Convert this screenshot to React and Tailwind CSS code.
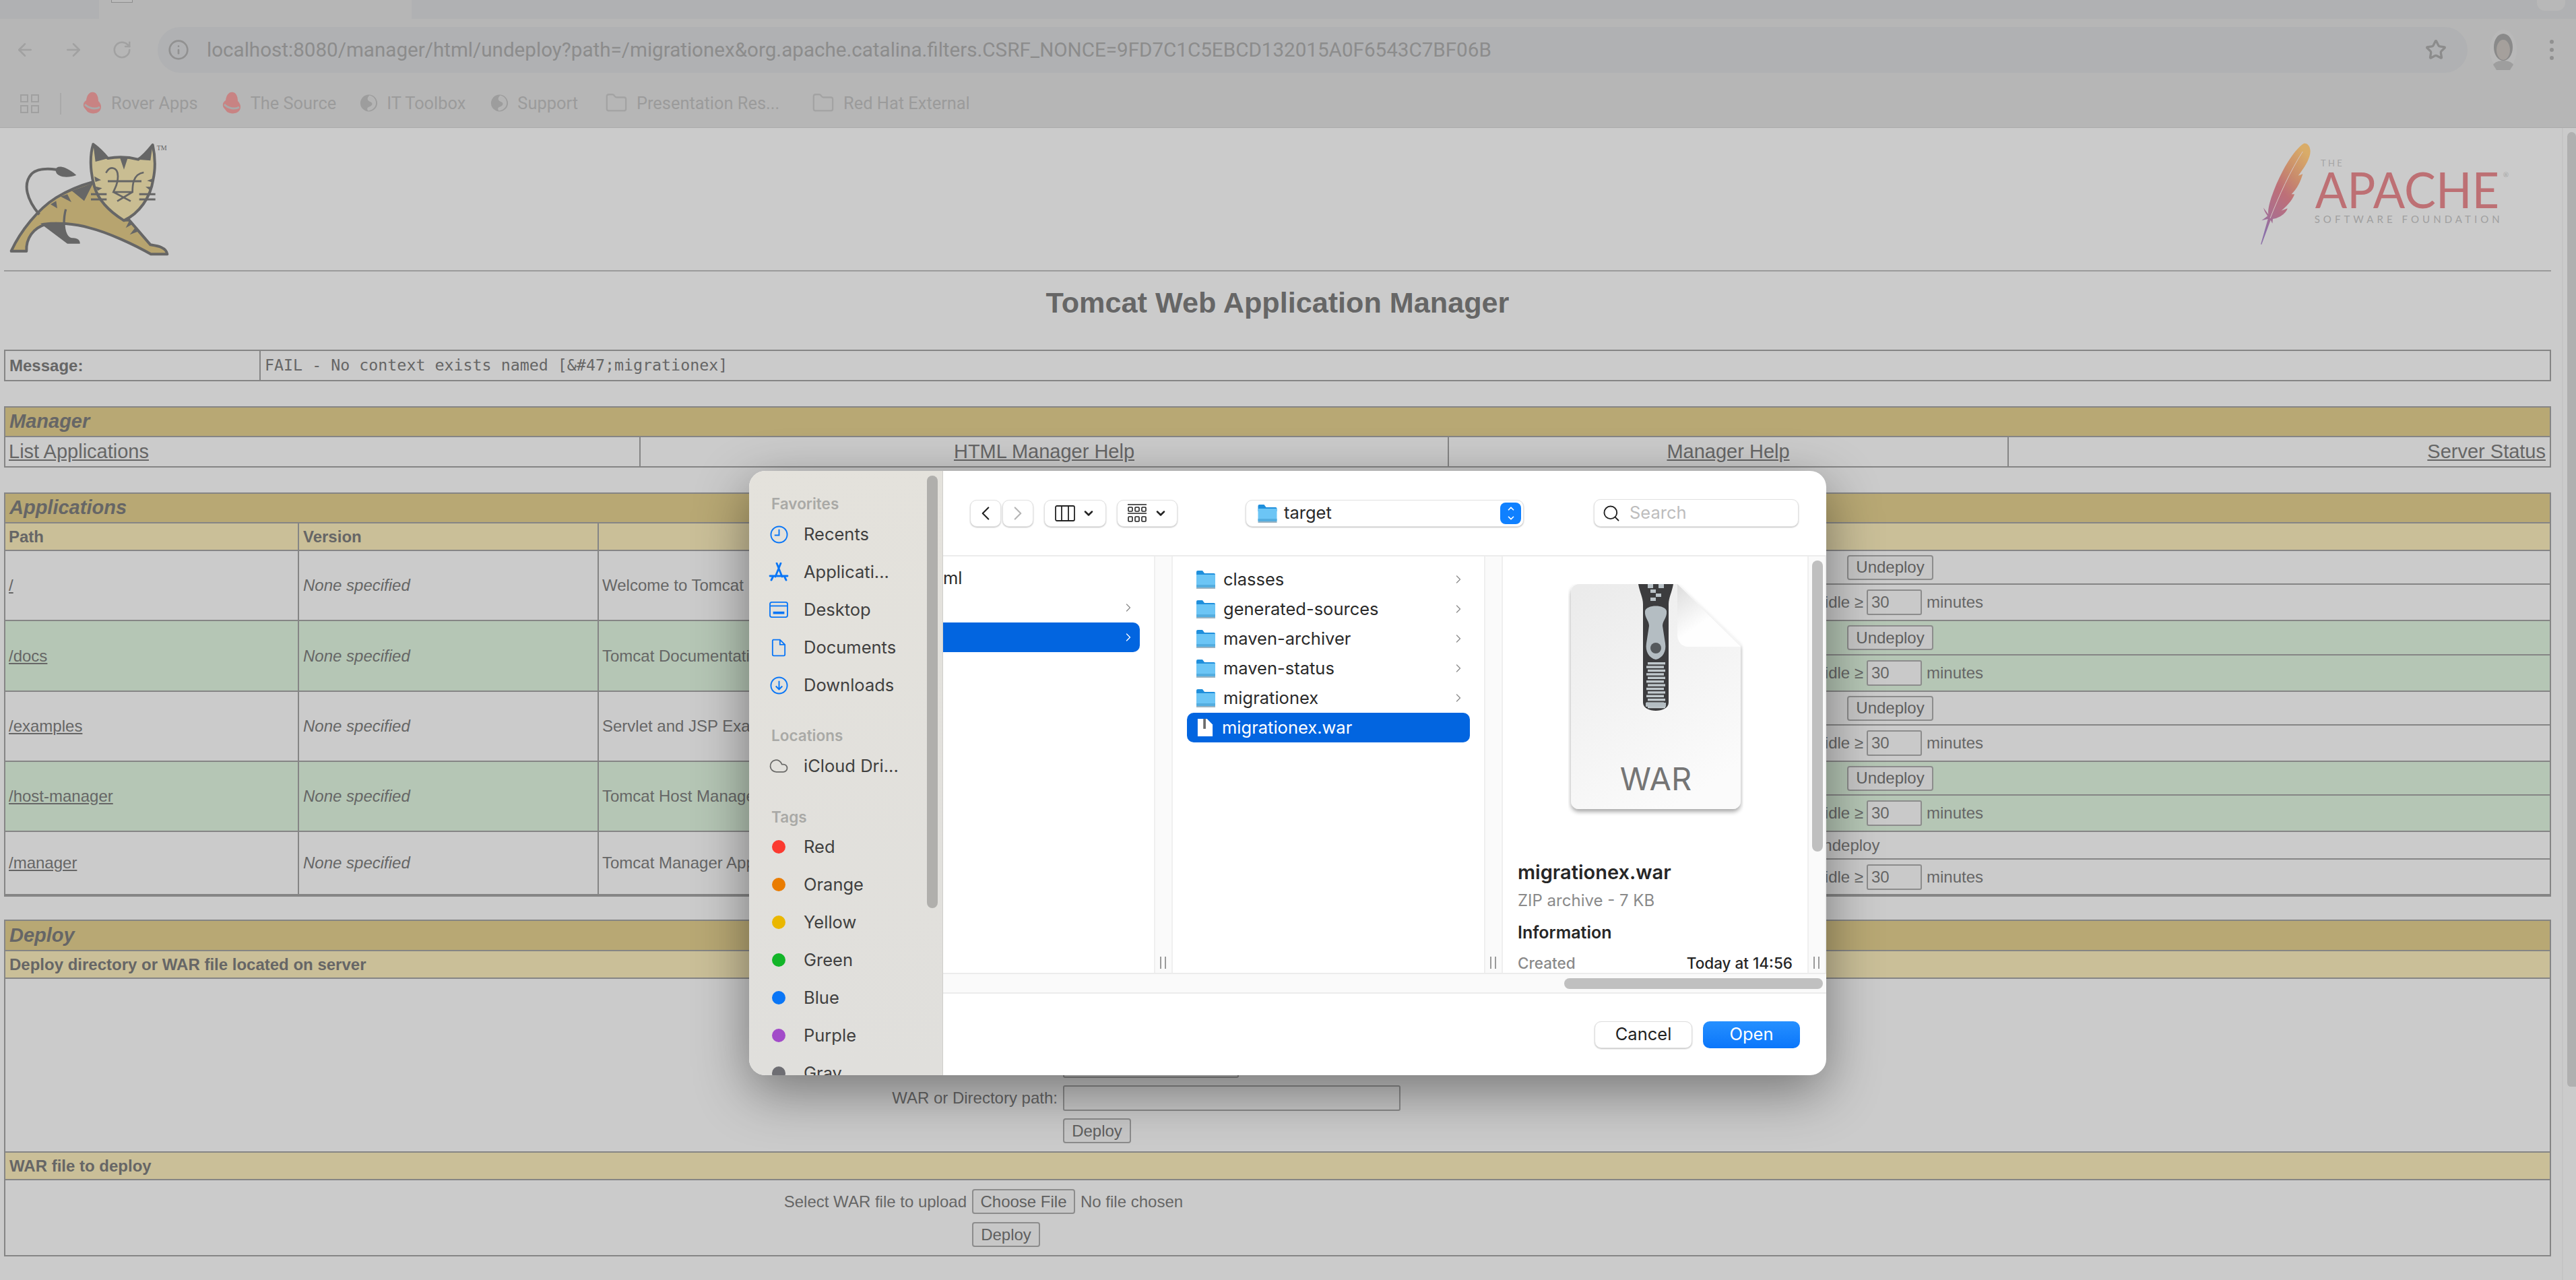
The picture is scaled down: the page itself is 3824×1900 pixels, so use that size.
import React from 'react';
import { ArrowLeft, ArrowRight, RotateCw, Info, Star, Search, Cloud, ChevronLeft, ChevronRight, ChevronDown, ChevronUp, Folder } from 'lucide-react';

const URL_TEXT = 'localhost:8080/manager/html/undeploy?path=/migrationex&org.apache.catalina.filters.CSRF_NONCE=9FD7C1C5EBCD132015A0F6543C7BF06B';

const RedHat = () => (
  <svg viewBox="0 0 32 36" className="w-[32px] h-[36px]">
    <path d="M6 26 C2 22 4 16 8 14 C9 6 13 1 19 2 C24 3 26 9 26 15 C30 19 31 24 29 28 C26 34 16 35 10 31 Z" fill="#c88383" />
    <path d="M6 20 C12 26 22 28 28 24" stroke="#a9a9a9" strokeWidth="3" fill="none" />
  </svg>
);

const GlobeMark = () => (
  <svg viewBox="0 0 28 36" className="w-[27px] h-[36px]">
    <circle cx="14" cy="18" r="13" fill="#9d9d9d" />
    <path d="M15 6 C11 10 11 14 16 16 C21 18 20 22 14 24 C11 25 11 28 13 30 C20 29 25 24 25 18 C25 12 21 7 15 6Z" fill="#b5b5b5" />
  </svg>
);

const Bookmark = ({ icon, label, className }) => (
  <div className={`flex items-center gap-[13px] shrink-0 ${className}`}>
    {icon}
    <span className="text-[25.4px] text-[#9b9b9b] font-['Roboto',sans-serif] whitespace-nowrap">{label}</span>
  </div>
);

const BrowserChrome = () => (
  <div className="h-[190px] shrink-0 flex flex-col bg-[#b6b6b6] border-b border-[#ababab] font-['Roboto',sans-serif]">
    <div className="h-[28px] flex bg-[#b0b1b3]">
      <div className="w-[147px] rounded-br-[14px] bg-[#b0b1b3]" />
      <div className="w-[464px] bg-[#b6b6b6] pl-[18px]">
        <div className="w-[32px] h-[4px] border-x border-b border-[#8d8d8d] bg-[#bbbbbb]" />
      </div>
      <div className="flex-1" />
      <div className="w-[42px] h-[16px] mr-[16px] rounded-b-[12px] bg-[#b8b8b8]" />
    </div>
    <div className="h-[92px] flex items-center pl-[22px]">
      <ArrowLeft className="w-[30px] h-[30px] text-[#a1a1a1]" strokeWidth={2} />
      <ArrowRight className="w-[30px] h-[30px] ml-[42px] text-[#a1a1a1]" strokeWidth={2} />
      <RotateCw className="w-[30px] h-[30px] ml-[42px] text-[#a1a1a1]" strokeWidth={2} />
      <div className="ml-[38px] w-[3429px] h-[68px] rounded-full bg-[#b0b1b3] flex items-center pl-[15px] pr-[31px]">
        <Info className="w-[32px] h-[32px] text-[#919191]" strokeWidth={2} />
        <span className="ml-[26px] text-[29.6px] text-[#8c8c8c] whitespace-nowrap">{URL_TEXT}</span>
        <Star className="w-[32px] h-[32px] ml-auto text-[#8c8c8c]" strokeWidth={2.5} />
      </div>
      <svg viewBox="0 0 40 60" className="ml-[33px] w-[40px] h-[60px]">
        <ellipse cx="20" cy="30" rx="20" ry="30" fill="#b9b9b9" />
        <ellipse cx="20" cy="26" rx="14" ry="20" fill="#8a8a8a" />
        <ellipse cx="20" cy="30" rx="10" ry="15" fill="#a5a09c" />
        <path d="M5 52 C10 44 30 44 35 52 L30 60 L10 60 Z" fill="#9e9e9e" />
      </svg>
      <div className="ml-[49px] flex flex-col gap-[6px]">
        <div className="w-[6px] h-[6px] rounded-full bg-[#919191]" />
        <div className="w-[6px] h-[6px] rounded-full bg-[#919191]" />
        <div className="w-[6px] h-[6px] rounded-full bg-[#919191]" />
      </div>
    </div>
    <div className="flex-1 flex items-center pb-[2px] pl-[30px]">
      <svg viewBox="0 0 28 28" className="w-[28px] h-[28px]" fill="none" stroke="#a0a0a0" strokeWidth="2">
        <rect x="1" y="1" width="10" height="10" /><rect x="17" y="1" width="10" height="10" />
        <rect x="1" y="17" width="10" height="10" /><rect x="17" y="17" width="10" height="10" />
      </svg>
      <div className="ml-[31px] w-[2px] h-[32px] bg-[#a9a9a9]" />
      <Bookmark icon={<RedHat />} label="Rover Apps" className="ml-[29px]" />
      <Bookmark icon={<RedHat />} label="The Source" className="ml-[33px]" />
      <Bookmark icon={<GlobeMark />} label="IT Toolbox" className="ml-[35px]" />
      <Bookmark icon={<GlobeMark />} label="Support" className="ml-[37px]" />
      <Bookmark icon={<Folder className="w-[34px] h-[34px] text-[#a3a3a3]" strokeWidth={1.6} />} label="Presentation Res..." className="ml-[40px]" />
      <Bookmark icon={<Folder className="w-[34px] h-[34px] text-[#a3a3a3]" strokeWidth={1.6} />} label="Red Hat External" className="ml-[48px]" />
    </div>
  </div>
);

const TomcatLogo = () => (
  <svg viewBox="0 0 900 600" className="w-[300px] h-[200px] shrink-0 -ml-[6px]">
    <path d="M50 548 C90 460 170 360 250 310 C300 280 360 255 415 240 L550 410 L575 410 L670 520 C700 525 740 530 745 562 L672 562 C600 520 480 465 400 445 C330 425 250 420 200 430 C150 445 115 490 118 548 Z" fill="#b7a46f" stroke="#666" strokeWidth="12" strokeLinejoin="round" />
    <path d="M180 425 C230 415 280 420 290 425 C290 460 300 485 320 490 C345 488 358 500 356 515 L300 515 Z" fill="#666" />
    <path d="M175 385 C120 320 100 250 140 205 C165 180 210 180 250 185" fill="none" stroke="#666" strokeWidth="12" />
    <path d="M248 185 C250 165 290 165 340 210 C300 225 245 220 248 185 Z" fill="#666" />
    <path d="M415 245 L375 325 L320 280 Z M300 295 L318 330 L270 305 Z M250 325 L255 358 L225 340 Z M560 445 L595 425 L575 415 Z M578 475 L622 458 L605 440 Z" fill="#666" />
    <path d="M293 362 C285 390 285 420 285 430" fill="none" stroke="#666" strokeWidth="10" />
    <path d="M415 72 C400 120 400 190 420 260 C440 330 500 380 552 412 C620 380 670 310 682 230 C695 170 690 120 680 75 C660 100 640 125 615 140 C570 128 520 128 480 135 C460 110 440 90 415 72 Z" fill="#c9bd92" stroke="#666" strokeWidth="12" strokeLinejoin="round" />
    <path d="M415 72 C440 90 470 110 482 135 L425 150 Z M680 75 L670 145 L612 140 C640 120 665 100 680 75 Z M535 135 L552 185 L570 130 Z M420 215 L450 232 L425 240 Z M425 260 L455 268 L435 280 Z M680 225 L655 235 L678 242 Z M672 262 L648 262 L666 276 Z" fill="#666" />
    <path d="M472 200 C490 165 525 175 525 215 C525 250 515 260 505 285 L590 285 C590 260 590 205 640 198 M505 285 L582 326 M590 285 L522 326" fill="none" stroke="#666" strokeWidth="8" />
    <path d="M480 237 H630 M405 295 H475 M405 318 H475 M620 295 H692 M620 318 H692" fill="none" stroke="#666" strokeWidth="9" />
    <path d="M45 548 H122" stroke="#666" strokeWidth="10" />
    <text x="698" y="98" fontFamily="Liberation Serif, serif" fontSize="30" fill="#666">TM</text>
  </svg>
);

const ApacheLogo = () => (
  <svg viewBox="0 0 1260 600" className="w-[420px] h-[200px] shrink-0 mr-[37px]">
    <defs>
      <linearGradient id="feather" x1="0.75" y1="0" x2="0.2" y2="1">
        <stop offset="0" stopColor="#d9ac68" />
        <stop offset="0.28" stopColor="#c98c6c" />
        <stop offset="0.5" stopColor="#bd6f78" />
        <stop offset="0.75" stopColor="#ad6f8c" />
        <stop offset="0.95" stopColor="#8c70a8" />
      </linearGradient>
    </defs>
    <path d="M272 68 C235 85 165 190 125 310 C112 350 110 372 112 385 L90 355 C95 375 105 385 108 392 L82 412 L110 405 L78 518 L82 518 L122 410 L130 425 L132 405 C150 405 190 385 197 358 L170 368 C200 345 225 310 228 295 L215 295 C240 270 255 240 265 205 L245 212 C270 180 305 130 298 95 C296 78 285 68 272 68 Z" fill="url(#feather)" />
    <path d="M265 105 C210 190 160 300 120 402" fill="none" stroke="#d6c6c2" strokeWidth="3" />
    <text x="345" y="170" fontFamily="Lato, sans-serif" fontSize="39" fill="#a5a5a5" textLength="95">THE</text>
    <text x="320" y="358" fontFamily="Lato, sans-serif" fontSize="219" fill="#bd7074" textLength="820" lengthAdjust="spacingAndGlyphs">APACHE</text>
    <text x="1157" y="220" fontFamily="Lato, sans-serif" fontSize="30" fill="#a5a5a5">®</text>
    <text x="317" y="422" fontFamily="Lato, sans-serif" fontSize="45" fill="#a0a0a0" textLength="825">SOFTWARE FOUNDATION</text>
  </svg>
);

const Table = ({ className = '', children }) => (
  <div className={`border-2 border-[#858585] flex flex-col ${className}`}>{children}</div>
);

const TitleRow = ({ label, h = 'h-[44px]' }) => (
  <div className={`${h} shrink-0 bg-[#b8a874] border-b-2 border-[#858585] pl-[6px] flex items-center text-[29px] font-bold italic`}>{label}</div>
);

const SubRow = ({ label, h = 'h-[41px]' }) => (
  <div className={`${h} shrink-0 bg-[#cabf98] border-b-2 border-[#858585] pl-[6px] flex items-center text-[24px] font-bold`}>{label}</div>
);

const Btn = ({ label, w }) => (
  <div className={`${w} h-[37px] shrink-0 bg-[#c7c7c7] border-2 border-[#8c8c8c] rounded-[4px] flex items-center justify-center text-[24px] text-[#5f5f5f]`}>{label}</div>
);

const Field = ({ w, value }) => (
  <div className={`${w} h-[38px] shrink-0 bg-[#c9c9c9] border-2 border-[#8c8c8c] rounded-[3px] pl-[5px] flex items-center text-[24px] text-[#666]`}>{value}</div>
);

const apps = [
  { path: '/', name: 'Welcome to Tomcat', green: false, top: 'h-[50px]', bottom: 'h-[54px]', rowH: 'h-[104px]' },
  { path: '/docs', name: 'Tomcat Documentation', green: true, top: 'h-[51px]', bottom: 'h-[54px]', rowH: 'h-[105px]' },
  { path: '/examples', name: 'Servlet and JSP Examples', green: false, top: 'h-[50px]', bottom: 'h-[54px]', rowH: 'h-[104px]' },
  { path: '/host-manager', name: 'Tomcat Host Manager Application', green: true, top: 'h-[50px]', bottom: 'h-[54px]', rowH: 'h-[104px]' },
  { path: '/manager', name: 'Tomcat Manager Application', green: false, top: 'h-[41px]', bottom: 'h-[53px]', rowH: 'h-[94px]', plain: true },
];

const AppRow = ({ app }) => (
  <div className={`${app.rowH} flex text-[24px] ${app.green ? 'bg-[#b5c6b5]' : ''}`}>
    <div className="w-[436px] shrink-0 border-r-2 border-b-2 border-[#858585] pl-[5px] flex items-center underline">{app.path}</div>
    <div className="w-[445px] shrink-0 border-r-2 border-b-2 border-[#858585] pl-[6px] flex items-center italic">None specified</div>
    <div className="flex-1 border-r-2 border-b-2 border-[#858585] pl-[5px] flex items-center whitespace-nowrap">{app.name}</div>
    <div className="w-[1500px] shrink-0 flex flex-col">
      <div className={`${app.top} border-b-2 border-[#858585] flex items-center`}>
        {app.plain ? (
          <div className="pl-[404px]">Undeploy</div>
        ) : (
          <div className="pl-[457px]"><Btn label="Undeploy" w="w-[128px]" /></div>
        )}
      </div>
      <div className={`${app.bottom} border-b-2 border-[#858585] flex items-center pl-[358px] whitespace-nowrap`}>
        <span className="w-[123px] text-right">with idle ≥</span>
        <div className="ml-[5px]"><Field w="w-[82px]" value="30" /></div>
        <span className="ml-[7px]">minutes</span>
      </div>
    </div>
  </div>
);

const FormRow = ({ label, cols, children }) => (
  <div className={`grid ${cols} items-center`}>
    <div className="text-right pr-[8px] text-[24px] whitespace-nowrap">{label}</div>
    <div className="flex items-center gap-[8px]">{children}</div>
  </div>
);

const TomcatPage = () => (
  <div className="flex-1 flex min-h-0 bg-[#cbcbcb] text-[#666] font-['Liberation_Sans',Arial,sans-serif]">
    <div className="flex-1 pl-[6px] pr-[16px] flex flex-col">
      <div className="h-[213px] shrink-0 flex justify-between items-start border-b-2 border-[#9a9a9a]">
        <TomcatLogo />
        <ApacheLogo />
      </div>
      <div className="h-[92px] shrink-0 flex items-center justify-center text-[43.2px] font-bold">Tomcat Web Application Manager</div>
      <div className="mt-[24px]">
        <Table>
          <div className="h-[43px] flex items-center">
            <div className="w-[379px] h-full border-r-2 border-[#858585] pl-[6px] flex items-center text-[24px] font-bold">Message:</div>
            <div className="pl-[6px] font-['DejaVu_Sans_Mono',monospace] text-[23.3px] whitespace-nowrap">FAIL - No context exists named [&amp;#47;migrationex]</div>
          </div>
        </Table>
      </div>
      <div className="mt-[37px]">
        <Table>
          <TitleRow label="Manager" />
          <div className="h-[43px] flex text-[29px]">
            <div className="w-[943px] border-r-2 border-[#858585] pl-[5px] flex items-center underline">List Applications</div>
            <div className="w-[1200px] border-r-2 border-[#858585] flex items-center justify-center underline">HTML Manager Help</div>
            <div className="w-[831px] border-r-2 border-[#858585] flex items-center justify-center underline">Manager Help</div>
            <div className="flex-1 pr-[6px] flex items-center justify-end underline">Server Status</div>
          </div>
        </Table>
      </div>
      <div className="mt-[37px]">
        <Table>
          <TitleRow label="Applications" />
          <div className="h-[41px] flex bg-[#cabf98] border-b-2 border-[#858585] text-[24px] font-bold">
            <div className="w-[436px] border-r-2 border-[#858585] pl-[5px] flex items-center">Path</div>
            <div className="w-[445px] border-r-2 border-[#858585] pl-[6px] flex items-center">Version</div>
          </div>
          {apps.map((app) => <AppRow key={app.path} app={app} />)}
        </Table>
      </div>
      <div className="mt-[34px]">
        <Table>
          <TitleRow label="Deploy" h="h-[45px]" />
          <SubRow label="Deploy directory or WAR file located on server" />
          <div className="h-[258px] border-b-2 border-[#858585] pt-[11px] flex flex-col gap-[11px]">
            <FormRow label="" cols="grid-cols-[1570px_1fr]"><Field w="w-[261px]" /></FormRow>
            <FormRow label="" cols="grid-cols-[1570px_1fr]"><Field w="w-[261px]" /></FormRow>
            <FormRow label="" cols="grid-cols-[1570px_1fr]"><Field w="w-[261px]" /></FormRow>
            <FormRow label="WAR or Directory path:" cols="grid-cols-[1570px_1fr]"><Field w="w-[501px]" /></FormRow>
            <FormRow label="" cols="grid-cols-[1570px_1fr]"><Btn label="Deploy" w="w-[101px]" /></FormRow>
          </div>
          <SubRow label="WAR file to deploy" />
          <div className="h-[111px] pt-[13px] flex flex-col gap-[12px]">
            <FormRow label="Select WAR file to upload" cols="grid-cols-[1435px_1fr]">
              <Btn label="Choose File" w="w-[153px]" />
              <span className="text-[24px] whitespace-nowrap">No file chosen</span>
            </FormRow>
            <FormRow label="" cols="grid-cols-[1435px_1fr]"><Btn label="Deploy" w="w-[101px]" /></FormRow>
          </div>
        </Table>
      </div>
    </div>
    <div className="w-[21px] shrink-0 border-l-2 border-[#c4c4c4] pl-[6px] pt-[6px]">
      <div className="h-[1417px] rounded-t-[12px] rounded-bl-[10px] bg-[#b0b0b0]" />
    </div>
  </div>
);

const FolderIcon = ({ className = 'w-[28px] h-[28px]' }) => (
  <svg viewBox="0 0 28 28" className={`${className} shrink-0`}>
    <path d="M0 3 a2 2 0 0 1 2-2 h7 l3 4 h14 a2 2 0 0 1 2 2 v4 H0 Z" fill="#1f8fdc" />
    <path d="M0 7 H28 V25 a2 2 0 0 1 -2 2 H2 a2 2 0 0 1 -2 -2 Z" fill="#6cc5f5" />
    <path d="M0 22 H28 V25 a2 2 0 0 1 -2 2 H2 a2 2 0 0 1 -2 -2 Z" fill="#54addf" />
    <path d="M0 26 H28 V28 H0 Z" fill="#9bb3c2" />
  </svg>
);

const SideTitle = ({ label, className }) => (
  <div className={`h-[28px] pl-[33px] flex items-center text-[22.5px] font-semibold text-[#a9a9a6] ${className}`}>{label}</div>
);

const SideItem = ({ icon, label }) => (
  <div className="h-[56px] flex items-center shrink-0">
    <div className="w-[81px] pl-[18px] flex justify-center pr-[11px]">{icon}</div>
    <span className="text-[25.5px] text-[#404040] whitespace-nowrap">{label}</span>
  </div>
);

const Dot = ({ color }) => <div className={`w-[20px] h-[20px] rounded-full ${color}`} />;

const blue = { fill: 'none', stroke: '#0a76f6', strokeWidth: 2 };

const Sidebar = () => (
  <div className="w-[288px] shrink-0 relative flex flex-col overflow-hidden border-r border-[#cfcecb] bg-gradient-to-b from-[#e4e2dc] to-[#e0dfdc]">
    <SideTitle label="Favorites" className="mt-[35px] mb-[3px]" />
    <SideItem label="Recents" icon={<svg viewBox="0 0 28 28" className="w-[27px] h-[27px]"><circle cx="14" cy="14" r="12.5" {...blue} /><path d="M14 6 V15 H7" {...blue} /></svg>} />
    <SideItem label="Applicati..." icon={<svg viewBox="0 0 28 28" className="w-[30px] h-[28px] shrink-0"><path d="M11 1 L19 21 M17 1 L9 21 M1 20 H27 M3 26 L6 20 M25 26 L22 20" fill="none" stroke="#0a76f6" strokeWidth="2.8" strokeLinecap="round" /></svg>} />
    <SideItem label="Desktop" icon={<svg viewBox="0 0 30 28" className="w-[30px] h-[26px]"><rect x="1" y="2" width="28" height="24" rx="3" {...blue} /><path d="M1 8 H29" {...blue} /><path d="M6 19 H24" fill="none" stroke="#0a76f6" strokeWidth="4" /></svg>} />
    <SideItem label="Documents" icon={<svg viewBox="0 0 24 28" className="w-[22px] h-[27px]"><path d="M3 1 H14 L22 9 V25 a2 2 0 0 1 -2 2 H4 a2 2 0 0 1 -2 -2 V3 a2 2 0 0 1 1 -2 Z M14 1 V9 H22" {...blue} /></svg>} />
    <SideItem label="Downloads" icon={<svg viewBox="0 0 28 28" className="w-[27px] h-[27px]"><circle cx="14" cy="14" r="12.5" {...blue} /><path d="M14 7 V20 M9 15 L14 20 L19 15" {...blue} /></svg>} />
    <SideTitle label="Locations" className="mt-[33px] mb-[3px]" />
    <SideItem label="iCloud Dri..." icon={<Cloud className="w-[34px] h-[30px] shrink-0 text-[#6a6a68]" strokeWidth={1.4} />} />
    <SideTitle label="Tags" className="mt-[34px] mb-[2px]" />
    <SideItem label="Red" icon={<Dot color="bg-[#fb3a30]" />} />
    <SideItem label="Orange" icon={<Dot color="bg-[#ea7c00]" />} />
    <SideItem label="Yellow" icon={<Dot color="bg-[#eab700]" />} />
    <SideItem label="Green" icon={<Dot color="bg-[#12b528]" />} />
    <SideItem label="Blue" icon={<Dot color="bg-[#0a76f6]" />} />
    <SideItem label="Purple" icon={<Dot color="bg-[#a24bc9]" />} />
    <SideItem label="Gray" icon={<Dot color="bg-[#6e6e73]" />} />
    <div className="absolute left-[264px] top-[7px] w-[16px] h-[642px] rounded-full bg-[#b0afac]" />
  </div>
);

const ToolBtn = ({ w, children }) => (
  <div className={`${w} h-[40px] shrink-0 bg-white rounded-[10px] border border-[#e2e2e2] shadow-[0_1px_2px_rgba(0,0,0,0.25)] flex items-center justify-center`}>{children}</div>
);

const DialogToolbar = () => (
  <div className="h-[127px] shrink-0 border-b-2 border-[#ececec] flex items-center pl-[40px]">
    <ToolBtn w="w-[46px]"><ChevronLeft className="w-[34px] h-[34px] text-[#222]" strokeWidth={1.5} /></ToolBtn>
    <ToolBtn w="w-[46px] ml-[2px]"><ChevronRight className="w-[34px] h-[34px] text-[#b5b5b5]" strokeWidth={1.5} /></ToolBtn>
    <ToolBtn w="w-[92px] ml-[16px]">
      <svg viewBox="0 0 30 24" className="w-[30px] h-[24px]" fill="none" stroke="#222" strokeWidth="1.8"><rect x="1" y="1" width="28" height="22" rx="2" /><path d="M10 1 V23 M20 1 V23" /></svg>
      <ChevronDown className="w-[20px] h-[20px] ml-[10px] text-[#222]" strokeWidth={3} />
    </ToolBtn>
    <ToolBtn w="w-[90px] ml-[16px]">
      <svg viewBox="0 0 30 28" className="w-[30px] h-[28px]" fill="none" stroke="#222" strokeWidth="1.6">
        <path d="M1 1 H29 M1 14 H29" />
        <rect x="2" y="5" width="6" height="6" rx="1" /><rect x="12" y="5" width="6" height="6" rx="1" /><rect x="22" y="5" width="6" height="6" rx="1" />
        <rect x="2" y="19" width="6" height="7" rx="1" /><rect x="12" y="19" width="6" height="7" rx="1" /><rect x="22" y="19" width="6" height="7" rx="1" />
      </svg>
      <ChevronDown className="w-[20px] h-[20px] ml-[10px] text-[#222]" strokeWidth={3} />
    </ToolBtn>
    <div className="ml-[101px] w-[413px] h-[40px] shrink-0 bg-white rounded-[10px] border border-[#e2e2e2] shadow-[0_1px_2px_rgba(0,0,0,0.25)] flex items-center pl-[17px] pr-[3px]">
      <FolderIcon className="w-[29px] h-[28px]" />
      <span className="ml-[10px] text-[25.5px] text-[#2a2a2a]">target</span>
      <div className="ml-auto w-[31px] h-[32px] rounded-[8px] bg-[#0f80ff] flex flex-col items-center justify-center">
        <ChevronUp className="w-[18px] h-[14px] text-white" strokeWidth={3} />
        <ChevronDown className="w-[18px] h-[14px] text-white" strokeWidth={3} />
      </div>
    </div>
    <div className="ml-[104px] w-[304px] h-[41px] shrink-0 bg-white rounded-[10px] border border-[#e2e2e2] shadow-[0_1px_2px_rgba(0,0,0,0.25)] flex items-center pl-[11px]">
      <Search className="w-[28px] h-[28px] text-[#222]" strokeWidth={1.6} />
      <span className="ml-[13px] text-[25.5px] text-[#bdbdbd]">Search</span>
    </div>
  </div>
);

const Gutter = ({ children }) => (
  <div className="w-[28px] shrink-0 relative bg-[#fafafa] border-x-2 border-[#efefef]">
    {children}
    <div className="absolute bottom-[6px] left-[7px] flex gap-[5px]">
      <div className="w-[2px] h-[18px] bg-[#9a9a9a]" />
      <div className="w-[2px] h-[18px] bg-[#9a9a9a]" />
    </div>
  </div>
);

const Chevron = ({ className = 'text-[#8c8c8c]' }) => <ChevronRight className={`w-[20px] h-[20px] ${className}`} strokeWidth={1.6} />;

const FileRow = ({ label }) => (
  <div className="h-[44px] flex items-center pl-[14px] pr-[7px]">
    <FolderIcon />
    <span className="ml-[12px] text-[25.5px] text-[#2a2a2a] whitespace-nowrap">{label}</span>
    <div className="ml-auto"><Chevron /></div>
  </div>
);

const ZipDoc = () => {
  const teeth = [];
  for (let i = 0; i < 13; i++) {
    teeth.push(<rect key={i} x={i % 2 ? 116 : 118} y={116 + i * 5.4} width="26" height="3.4" fill="#c0c8cc" />);
  }
  return (
    <svg viewBox="0 0 260 346" className="w-[260px] h-[346px] ml-[97px] mt-[41px] shrink-0">
      <defs>
        <linearGradient id="docFill" x1="0.1" y1="0" x2="0.6" y2="1">
          <stop offset="0" stopColor="#ebebeb" />
          <stop offset="1" stopColor="#fbfbfb" />
        </linearGradient>
        <linearGradient id="foldFill" x1="0" y1="0" x2="0.7" y2="1">
          <stop offset="0" stopColor="#dcdcdc" />
          <stop offset="0.6" stopColor="#fefefe" />
        </linearGradient>
        <filter id="docShadow" x="-10%" y="-10%" width="120%" height="120%">
          <feDropShadow dx="0" dy="4" stdDeviation="3" floodColor="#000" floodOpacity="0.35" />
        </filter>
      </defs>
      <path d="M16 0 H162 L256 90 V322 a12 12 0 0 1 -12 12 H16 a12 12 0 0 1 -12 -12 V12 a12 12 0 0 1 12 -12 Z" fill="url(#docFill)" filter="url(#docShadow)" />
      <path d="M162 0 L256 93 H178 C168 93 162 85 162 75 Z" fill="url(#foldFill)" />
      <path d="M104 0 H156 C154 12 149 20 149 30 V176 C149 192 111 192 111 176 V30 C111 20 106 12 104 0 Z" fill="#3c3c3e" />
      <path d="M118 0 h8 v6 h-8 z M134 0 h8 v6 h-8 z M122 8 h8 v5 h-8 z M130 14 h8 v5 h-8 z M122 20 h8 v5 h-8 z" fill="#b9c2c7" />
      <path d="M114 40 C116 30 144 30 146 40 C147 50 140 54 140 62 L144 88 C146 100 140 110 130 112 C120 110 114 100 116 88 L120 62 C120 54 113 50 114 40 Z" fill="#b4bdc2" />
      <circle cx="130" cy="95" r="8" fill="#55595c" />
      {teeth}
      <rect x="115" y="176" width="30" height="6" fill="#b4bdc2" />
      <text x="130" y="306" textAnchor="middle" fontFamily="Inter, sans-serif" fontSize="47" fill="#757575">WAR</text>
    </svg>
  );
};

const Preview = () => (
  <div className="w-[452px] shrink-0 flex flex-col overflow-hidden">
    <ZipDoc />
    <div className="pl-[22px] pr-[22px] flex flex-col">
      <div className="mt-[65px] h-[34px] flex items-center text-[29px] font-semibold text-[#262626]">migrationex.war</div>
      <div className="mt-[10px] h-[30px] flex items-center text-[24px] text-[#8a8a8a]">ZIP archive - 7 KB</div>
      <div className="mt-[18px] h-[30px] flex items-center text-[25px] font-semibold text-[#262626]">Information</div>
      <div className="mt-[15px] h-[30px] flex items-center justify-between text-[22.5px]">
        <span className="text-[#8a8a8a] font-medium">Created</span>
        <span className="text-[#262626] font-medium">Today at 14:56</span>
      </div>
    </div>
  </div>
);

const FileDialog = () => (
  <div className="absolute left-[1112px] top-[699px] w-[1599px] h-[897px] rounded-[24px] overflow-hidden flex bg-white shadow-[0_24px_80px_rgba(0,0,0,0.42)] font-['Inter',sans-serif]">
    <Sidebar />
    <div className="flex-1 flex flex-col min-w-0">
      <DialogToolbar />
      <div className="h-[618px] shrink-0 flex">
        <div className="w-[313px] shrink-0 pt-[10px] pr-[21px]">
          <div className="h-[44px] flex items-center text-[25.5px] text-[#2a2a2a]">ml</div>
          <div className="h-[44px] flex items-center justify-end pr-[7px]"><Chevron /></div>
          <div className="h-[44px] flex items-center justify-end pr-[7px] bg-[#0265e0] rounded-r-[10px]"><Chevron className="text-white" /></div>
        </div>
        <Gutter />
        <div className="w-[462px] shrink-0 pt-[12px] px-[21px]">
          <FileRow label="classes" />
          <FileRow label="generated-sources" />
          <FileRow label="maven-archiver" />
          <FileRow label="maven-status" />
          <FileRow label="migrationex" />
          <div className="h-[44px] flex items-center pl-[15px] bg-[#0265e0] rounded-[10px]">
            <svg viewBox="0 0 26 30" className="w-[24px] h-[28px] shrink-0">
              <path d="M1 1 H16 L25 10 V29 H1 Z" fill="#fff" />
              <path d="M10 1 H14 V17 H10 Z" fill="#6b6b6b" />
            </svg>
            <span className="ml-[13px] text-[25.5px] text-white whitespace-nowrap">migrationex.war</span>
          </div>
        </div>
        <Gutter />
        <Preview />
        <Gutter>
          <div className="absolute left-[5px] top-[6px] w-[16px] h-[432px] rounded-full bg-[#bfbfbf]" />
        </Gutter>
      </div>
      <div className="h-[31px] shrink-0 bg-[#fafafa] border-y-2 border-[#ececec] flex items-center pl-[922px] pr-[5px]">
        <div className="flex-1 h-[16px] rounded-full bg-[#c0c0c0]" />
      </div>
      <div className="flex-1 flex items-center justify-end pr-[39px] gap-[16px] text-[25.5px]">
        <div className="w-[145px] h-[40px] bg-white rounded-[10px] border border-[#dedede] shadow-[0_1px_2px_rgba(0,0,0,0.25)] flex items-center justify-center text-[#222]">Cancel</div>
        <div className="w-[144px] h-[40px] rounded-[10px] bg-gradient-to-b from-[#2590ff] to-[#0a76fb] flex items-center justify-center text-white">Open</div>
      </div>
    </div>
  </div>
);

export default function App() {
  return (
    <div className="w-[3824px] h-[1900px] relative overflow-hidden flex flex-col">
      <BrowserChrome />
      <TomcatPage />
      <FileDialog />
    </div>
  );
}
